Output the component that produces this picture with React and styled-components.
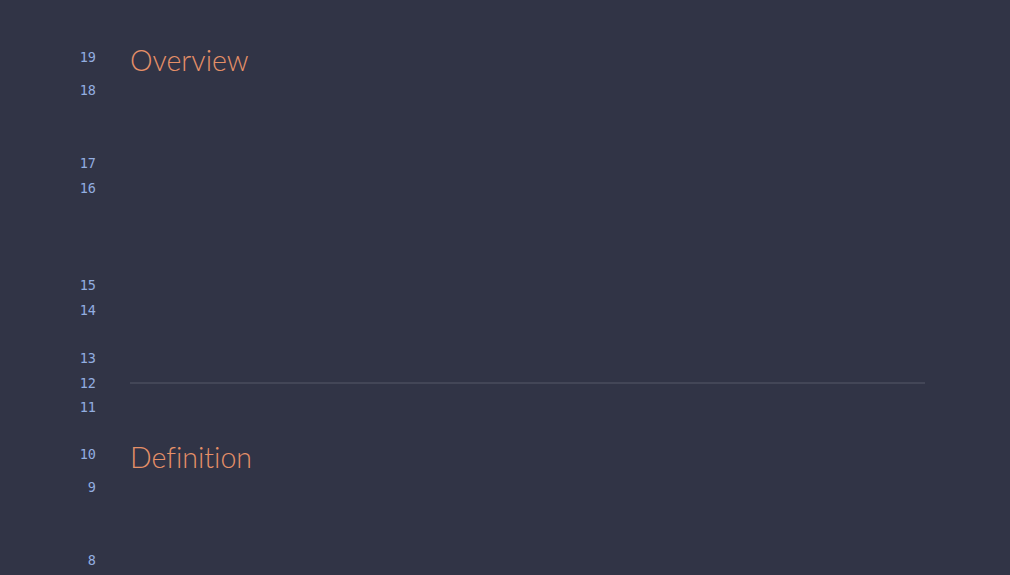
import styled, { createGlobalStyle } from 'styled-components';

const GlobalStyle = createGlobalStyle`
    html, body {
        margin: 0;
        padding: 0;
        background-color: #313446;
    }
`

const lines = [
    { n: 19, h: 33, kind: 'heading', text: 'Overview' },
    { n: 18, h: 73 },
    { n: 17, h: 25 },
    { n: 16, h: 97 },
    { n: 15, h: 25 },
    { n: 14, h: 48 },
    { n: 13, h: 25 },
    { n: 12, h: 24, kind: 'rule' },
    { n: 11, h: 47 },
    { n: 10, h: 33, kind: 'heading', text: 'Definition' },
    { n: 9, h: 73 },
    { n: 8, h: 40 },
];

export default function App() {
    return (
        <Editor>
            <GlobalStyle />
            {lines.map((line) => (
                <Row key={line.n} $h={line.h}>
                    <Gutter>{line.n}</Gutter>
                    <Content>
                        {line.kind === 'heading' && <Heading>{line.text}</Heading>}
                        {line.kind === 'rule' && <Rule />}
                    </Content>
                </Row>
            ))}
        </Editor>
    )
}

const Editor = styled.div`
    width: 100vw;
    height: 575px;
    overflow: hidden;
    box-sizing: border-box;
    padding-top: 45px;
    background-color: #313446;
    display: flex;
    flex-direction: column;
`
const Row = styled.div`
    display: flex;
    height: ${(p) => p.$h}px;
    flex-shrink: 0;
`
const Gutter = styled.div`
    width: 96px;
    flex-shrink: 0;
    text-align: right;
    font-family: 'DejaVu Sans Mono', monospace;
    font-size: 13.5px;
    line-height: 24px;
    color: #93aee0;
`
const Content = styled.div`
    width: 795px;
    margin-left: 34px;
    display: flex;
    flex-direction: column;
`
const Heading = styled.h1`
    margin: 0;
    font-family: 'Lato', sans-serif;
    font-weight: 300;
    font-size: 28.5px;
    line-height: 30px;
    font-variant-ligatures: none;
    color: #e69068;
`
const Rule = styled.div`
    margin-top: 11px;
    height: 2px;
    background-color: #434657;
`
